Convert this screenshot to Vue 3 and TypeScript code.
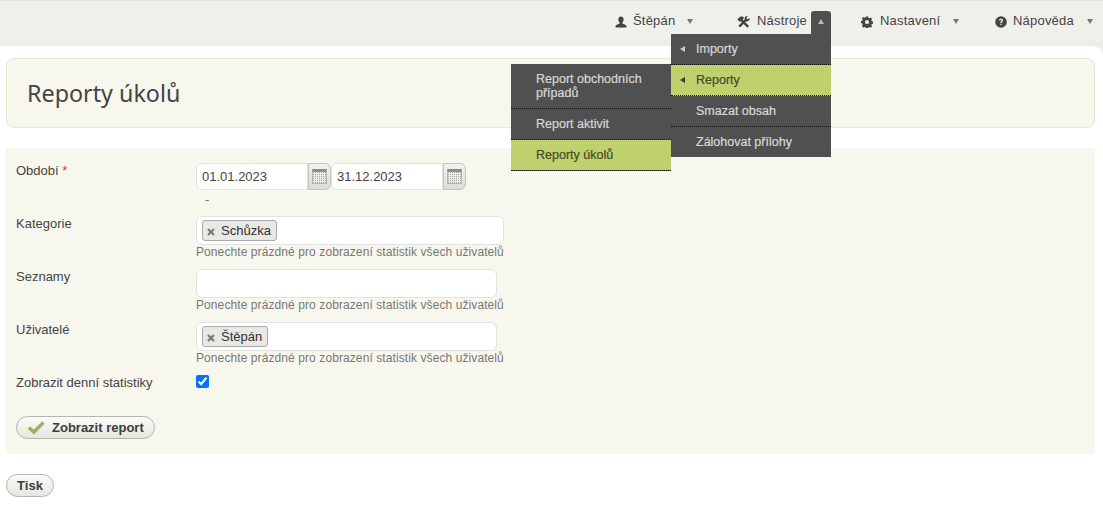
<script setup lang="ts">
const toolsMenu = [
  { label: 'Importy', arrow: true, active: false },
  { label: 'Reporty', arrow: true, active: true },
  { label: 'Smazat obsah', arrow: false, active: false },
  { label: 'Zálohovat přílohy', arrow: false, active: false },
]
const reportsMenu = [
  { label: 'Report obchodních případů', active: false },
  { label: 'Report aktivit', active: false },
  { label: 'Reporty úkolů', active: true },
]
const hint = 'Ponechte prázdné pro zobrazení statistik všech uživatelů'
</script>

<template>
  <div class="app">
    <header class="topbar">
      <div class="nav-item user">
        <svg class="ico" viewBox="0 0 12 12"><path d="M6 .5c1.700 0 2.600 1.300 2.600 3 0 1.300-.5 2.400-1.200 3v1.100l3.300 1.300c.6.300.8.700.8 1.400v1.200H.5v-1.200c0-.7.200-1.100.8-1.400l3.300-1.300V6.500c-.7-.6-1.200-1.700-1.200-3 0-1.700.9-3 2.600-3z" fill="#444"/></svg>
        <span>Štěpán</span><i class="caret down"></i>
      </div>
      <div class="nav-item tools">
        <svg class="ico" viewBox="0 0 13 12">
          <path d="M2.200 10.600 8.800 4M4 3.600l7.200 7.200" stroke="#444" stroke-width="2.400" fill="none"/>
          <path d="M.4 3.300 3.400.4h2.400l1.200 1.500-2.700 3.600-2 .1z" fill="#444"/>
          <path d="M12.700 2a3 3 0 0 1-4 3.300L7.600 3.200A3 3 0 0 1 10.800.1L9.400 1.900l1.200 1.300z" fill="#444"/>
        </svg>
        <span>Nástroje</span>
        <div class="tools-toggle"><i class="caret up"></i></div>
        <ul class="menu tools-menu">
          <li v-for="m in toolsMenu" :key="m.label" :class="{ active: m.active }">
            <i v-if="m.arrow" class="caret left"></i>{{ m.label }}
          </li>
        </ul>
        <ul class="menu reports-menu">
          <li v-for="m in reportsMenu" :key="m.label" :class="{ active: m.active }">{{ m.label }}</li>
        </ul>
      </div>
      <div class="nav-item settings">
        <svg class="ico" viewBox="0 0 12 12"><path fill-rule="evenodd" d="M4.900.4h2.200l.3 1.500.9.400 1.300-.8 1.500 1.500-.8 1.300.4.900 1.500.3v2.200l-1.500.3-.4.900.8 1.300-1.500 1.500-1.300-.8-.9.400-.3 1.500H4.900l-.3-1.500-.9-.4-1.300.8L.9 9.700l.8-1.300-.4-.9L-.1 7.200V5l1.400-.3.4-.9-.8-1.300 1.500-1.500 1.300.8.900-.4zM6 4a2.100 2.100 0 1 0 0 4.200A2.100 2.100 0 0 0 6 4z" fill="#444"/></svg>
        <span>Nastavení</span><i class="caret down"></i>
      </div>
      <div class="nav-item help">
        <svg class="ico" viewBox="0 0 12 12"><circle cx="6" cy="6" r="5.800" fill="#444"/><path d="M3.900 4.600C4 3.400 4.900 2.800 6 2.800s2.100.6 2.100 1.700c0 1.500-1.500 1.400-1.500 2.600H5.300c0-1.800 1.400-1.700 1.400-2.600 0-.4-.3-.6-.7-.6s-.7.300-.8.700zM5.300 7.800h1.300v1.300H5.300z" fill="#eeeee8"/></svg>
        <span>Nápověda</span><i class="caret down"></i>
      </div>
    </header>

    <main class="page">
      <div class="title-box"><h1>Reporty úkolů</h1></div>

      <form class="panel" @submit.prevent>
        <div class="row period">
          <label>Období <em>*</em></label>
          <div class="field">
            <div class="dates">
              <input class="date" value="01.01.2023" />
              <button type="button" class="cal" aria-label="Kalendář"><span class="cal-glyph"></span></button>
              <input class="date" value="31.12.2023" />
              <button type="button" class="cal" aria-label="Kalendář"><span class="cal-glyph"></span></button>
            </div>
            <div class="dash">-</div>
          </div>
        </div>

        <div class="row">
          <label>Kategorie</label>
          <div class="field">
            <div class="multi wide"><span class="tag"><svg class="x" viewBox="0 0 8 8"><path d="M1 2.200 2.200 1 4 2.800 5.800 1 7 2.200 5.200 4 7 5.800 5.800 7 4 5.200 2.200 7 1 5.800 2.800 4z" fill="#777"/></svg>Schůzka</span></div>
            <div class="hint">{{ hint }}</div>
          </div>
        </div>

        <div class="row">
          <label>Seznamy</label>
          <div class="field">
            <div class="multi"></div>
            <div class="hint">{{ hint }}</div>
          </div>
        </div>

        <div class="row">
          <label>Uživatelé</label>
          <div class="field">
            <div class="multi"><span class="tag"><svg class="x" viewBox="0 0 8 8"><path d="M1 2.200 2.200 1 4 2.800 5.800 1 7 2.200 5.200 4 7 5.800 5.800 7 4 5.200 2.200 7 1 5.800 2.800 4z" fill="#777"/></svg>Štěpán</span></div>
            <div class="hint">{{ hint }}</div>
          </div>
        </div>

        <div class="row check-row">
          <label>Zobrazit denní statistiky</label>
          <div class="field"><input type="checkbox" checked /></div>
        </div>

        <button type="button" class="btn submit">
          <svg viewBox="0 0 18 14" width="18" height="14"><path d="M.5 7.500 3.200 5.400l3.500 3.300L15 .6l2.700 1.800L7 13.600z" fill="#9ab35a"/></svg>
          Zobrazit report
        </button>
      </form>

      <button type="button" class="btn print">Tisk</button>
    </main>
  </div>
</template>

<style>
html, body { margin: 0; background: #fff; }
</style>

<style scoped>
.app {
  width: 1103px;
  height: 519px;
  overflow: hidden;
  font-family: "Liberation Sans", Arial, sans-serif;
  font-size: 13px;
  color: #444;
  background: #eeeee8;
}
.topbar {
  height: 46px;
  box-sizing: border-box;
  border-top: 1px solid #e2e2dc;
  display: flex;
  justify-content: flex-end;
  background: linear-gradient(#f0f0ea 0 38px, #ebebe5 45px);
  font-size: 13px;
  letter-spacing: 0.2px;
  color: #444;
  position: relative;
  z-index: 2;
}
.nav-item {
  display: flex;
  align-items: flex-start;
  padding-top: 13px;
  height: 33px;
  position: relative;
  line-height: 14px;
}
.ico { width: 12px; height: 12px; margin: 2px 6px 0 0; flex: none; }
.user { width: 122px; }
.tools { width: 124px; }
.tools .ico { width: 13px; margin-right: 7px; }
.settings { width: 134px; }
.settings .ico { margin-right: 7px; }
.help { width: 108px; }
.caret { display: block; width: 0; height: 0; border-style: solid; border-color: transparent; flex: none; }
.caret.down { border-width: 5px 3px 0; border-top-color: #777; margin: 5px 0 0 12px; }
.settings .caret.down { margin-left: 13px; }
.help .caret.down { margin-left: 13px; }
.caret.up { border-width: 0 3px 5px; border-bottom-color: #bbb; }
.caret.left { border-width: 3px 5px 3px 0; border-right-color: #ccc; position: absolute; left: 9px; top: 12px; }
.tools-toggle {
  position: absolute;
  left: 74px;
  top: 10px;
  width: 20px;
  height: 24px;
  background: #505050;
  border-radius: 3px 3px 0 0;
  display: flex;
  justify-content: center;
  padding-top: 8px;
  box-sizing: border-box;
}
.menu {
  list-style: none;
  margin: 0;
  padding: 0;
  position: absolute;
  background: #505050;
  color: #d8d8d8;
  font-size: 12.500px;
  letter-spacing: 0;
  -webkit-text-stroke: 0.2px;
}
.menu li {
  position: relative;
  padding: 8px 15px 8px 25px;
  line-height: 14px;
  border-bottom: 1px dotted #111;
  height: 14px;
}
.menu li:last-child { border-bottom: 0; }
.menu li.active { background: #bfd16d; color: #44482c; }
.menu li.active .caret.left { border-right-color: #3a3d28; }
.tools-menu { left: -66px; top: 33px; width: 160px; }
.reports-menu { left: -226px; top: 63px; width: 160px; border-bottom: 1px dotted #111; }
.reports-menu li:first-child { height: 28px; }
.page {
  height: 473px;
  box-sizing: border-box;
  background: #fff;
  border-radius: 0 10px 0 0;
  padding: 12px 8px 0 6px;
}
.title-box {
  height: 70px;
  box-sizing: border-box;
  background: #f7f7ee;
  border: 1px solid #e5e9cd;
  border-radius: 8px;
  padding: 0 20px;
  display: flex;
  align-items: center;
}
h1 {
  margin: 0;
  font: 400 23.300px/34px "Noto Sans", sans-serif;
  color: #444;
}
.panel {
  margin-top: 20px;
  height: 306px;
  box-sizing: border-box;
  background: #f7f7ee;
  padding: 15px 10px 0;
}
.row {
  display: flex;
  height: 53px;
}
.row label { width: 180px; flex: none; line-height: 15px; }
.row label em { color: #e33; font-style: normal; }
.field { display: flex; flex-direction: column; }
.dates { display: flex; height: 27px; align-items: flex-start; }
.date {
  box-sizing: border-box;
  width: 112px;
  height: 27px;
  border: 1px solid #e2e2e2;
  border-radius: 6px 0 0 6px;
  background: #fff;
  padding: 0 5px;
  font: 13px "Liberation Sans", Arial, sans-serif;
  color: #444;
  outline: 0;
}
.cal {
  box-sizing: border-box;
  width: 23px;
  height: 27px;
  padding: 0;
  border: 1px solid #c4c4bc;
  border-radius: 0 6px 6px 0;
  background: linear-gradient(#f2f2ec, #dcdcd4);
  display: flex;
  align-items: center;
  justify-content: center;
}
.cal-glyph {
  display: block;
  width: 15px;
  height: 15px;
  box-sizing: border-box;
  border: 1px solid #b5b5b0;
  border-top: 3px solid #8c8c88;
  background:
    repeating-linear-gradient(90deg, transparent 0 1px, #f0f0ec 1px 2px),
    repeating-linear-gradient(0deg, #a8a8a4 0 1px, #e4e4e0 1px 2px);
}
.dash { color: #777; line-height: 12px; margin: 4px 0 0 9px; }
.multi {
  box-sizing: border-box;
  width: 301px;
  height: 29px;
  background: #fff;
  border: 1px solid #e2e2e2;
  border-radius: 6px;
  padding: 3px 5px;
}
.multi.wide { width: 308px; }
.tag {
  display: inline-flex;
  align-items: center;
  box-sizing: border-box;
  height: 21px;
  padding: 0 5px 0 4px;
  background: #e8e8e4;
  border: 1px solid #aaa;
  border-radius: 3px;
  color: #333;
}
.x { width: 10px; height: 10px; margin: 2px 5px 0 -1px; flex: none; }
.hint { font-size: 12px; letter-spacing: 0.09px; color: #777; line-height: 14px; white-space: nowrap; }
.check-row { height: 41px; }
.check-row input { margin: 0; width: 13px; height: 13px; accent-color: #0075ff; }
.btn {
  display: inline-flex;
  align-items: center;
  box-sizing: border-box;
  height: 23px;
  border: 1px solid #b5b5ad;
  border-radius: 12px;
  background: linear-gradient(#fbfbf8, #e6e6e0);
  font: 700 13px "Liberation Sans", Arial, sans-serif;
  color: #3c3c3c;
  padding: 0 10px;
}
.submit { width: 139px; gap: 7px; }
.print { width: 48px; margin-top: 20px; justify-content: center; padding: 0; }
</style>
